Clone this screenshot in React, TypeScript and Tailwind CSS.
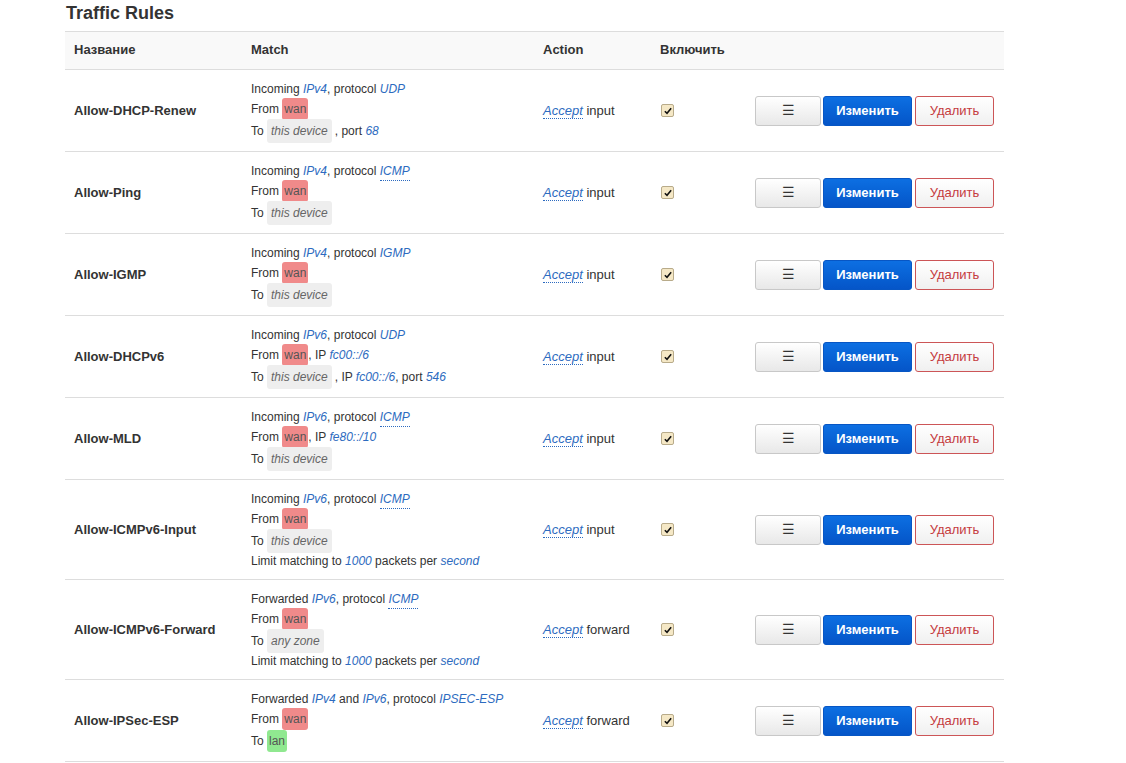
import React from 'react'

type Part = string | { t: string; link?: boolean; dotted?: boolean; badge?: 'red' | 'gray' | 'green' }
type Line = { parts: Part[]; badge?: boolean }

type Rule = {
  name: string
  lines: Line[]
  target: string
}

const L = (t: string, dotted = false): Part => ({ t, link: true, dotted })
const red = (t: string): Part => ({ t, badge: 'red' })
const gray = (t: string): Part => ({ t, badge: 'gray' })
const green = (t: string): Part => ({ t, badge: 'green' })

const limit: Line = {
  parts: ['Limit matching to ', L('1000'), ' packets per ', L('second')],
}

const rules: Rule[] = [
  {
    name: 'Allow-DHCP-Renew',
    lines: [
      { parts: ['Incoming ', L('IPv4'), ', protocol ', L('UDP')] },
      { parts: ['From ', red('wan')], badge: true },
      { parts: ['To ', gray('this device'), ', port ', L('68')], badge: true },
    ],
    target: 'input',
  },
  {
    name: 'Allow-Ping',
    lines: [
      { parts: ['Incoming ', L('IPv4'), ', protocol ', L('ICMP', true)] },
      { parts: ['From ', red('wan')], badge: true },
      { parts: ['To ', gray('this device')], badge: true },
    ],
    target: 'input',
  },
  {
    name: 'Allow-IGMP',
    lines: [
      { parts: ['Incoming ', L('IPv4'), ', protocol ', L('IGMP')] },
      { parts: ['From ', red('wan')], badge: true },
      { parts: ['To ', gray('this device')], badge: true },
    ],
    target: 'input',
  },
  {
    name: 'Allow-DHCPv6',
    lines: [
      { parts: ['Incoming ', L('IPv6'), ', protocol ', L('UDP')] },
      { parts: ['From ', red('wan'), ', IP ', L('fc00::/6')], badge: true },
      { parts: ['To ', gray('this device'), ', IP ', L('fc00::/6'), ', port ', L('546')], badge: true },
    ],
    target: 'input',
  },
  {
    name: 'Allow-MLD',
    lines: [
      { parts: ['Incoming ', L('IPv6'), ', protocol ', L('ICMP', true)] },
      { parts: ['From ', red('wan'), ', IP ', L('fe80::/10')], badge: true },
      { parts: ['To ', gray('this device')], badge: true },
    ],
    target: 'input',
  },
  {
    name: 'Allow-ICMPv6-Input',
    lines: [
      { parts: ['Incoming ', L('IPv6'), ', protocol ', L('ICMP', true)] },
      { parts: ['From ', red('wan')], badge: true },
      { parts: ['To ', gray('this device')], badge: true },
      limit,
    ],
    target: 'input',
  },
  {
    name: 'Allow-ICMPv6-Forward',
    lines: [
      { parts: ['Forwarded ', L('IPv6'), ', protocol ', L('ICMP', true)] },
      { parts: ['From ', red('wan')], badge: true },
      { parts: ['To ', gray('any zone')], badge: true },
      limit,
    ],
    target: 'forward',
  },
  {
    name: 'Allow-IPSec-ESP',
    lines: [
      { parts: ['Forwarded ', L('IPv4'), ' and ', L('IPv6'), ', protocol ', L('IPSEC-ESP')] },
      { parts: ['From ', red('wan')], badge: true },
      { parts: ['To ', green('lan')], badge: true },
    ],
    target: 'forward',
  },
]

function Piece({ p }: { p: Part }) {
  if (typeof p === 'string') return <span className="whitespace-pre">{p}</span>
  if (p.badge === 'red')
    return <span className="rounded-[3px] bg-[#f08a8a] px-[2px] py-[2px] text-[#555]">{p.t}</span>
  if (p.badge === 'green')
    return <span className="rounded-[3px] bg-[#90e890] px-[2px] py-[2px] text-[#555]">{p.t}</span>
  if (p.badge === 'gray')
    return <span className="mr-[3px] rounded-[3px] bg-[#eeeeee] px-[4px] py-[3px] italic text-[#666]">{p.t}</span>
  return (
    <span
      className={
        'italic text-[#2d6bc0]' +
        (p.dotted ? ' border-b border-dotted border-[#2d6bc0]' : '')
      }
    >
      {p.t}
    </span>
  )
}

function Checkbox() {
  return (
    <span className="inline-flex h-[13px] w-[13px] items-center justify-center rounded-[2px] border border-[#b8ab8a] bg-[#f5e8c6]">
      <svg viewBox="0 0 12 12" className="h-[10px] w-[10px]">
        <path d="M2.2 6.3 L4.8 8.8 L9.8 2.8" fill="none" stroke="#111" strokeWidth="1.9" />
      </svg>
    </span>
  )
}

function Row({ r }: { r: Rule }) {
  return (
    <tr className="border-b border-[#dddddd]">
      <td className="px-[9px] align-middle text-[13px] font-bold text-[#333]">{r.name}</td>
      <td className="px-[9px] pt-[10px] pb-[9px] align-middle text-[12px] text-[#333]">
        {r.lines.map((ln, i) => (
          <div key={i} className={ln.badge ? 'flex h-[22px] items-center' : 'flex h-[18px] items-center'}>
            {ln.parts.map((p, j) => (
              <Piece key={j} p={p} />
            ))}
          </div>
        ))}
      </td>
      <td className="px-[9px] align-middle text-[13px] text-[#333]">
        <span className="border-b border-dotted border-[#2d6bc0] italic text-[#2d6bc0]">Accept</span> {r.target}
      </td>
      <td className="px-[10px] align-middle">
        <span className="flex">
          <Checkbox />
        </span>
      </td>
      <td className="pl-[9px] align-middle">
        <div className="flex">
          <button className="h-[30px] w-[66px] rounded-[3px] border border-[#c8c8c8] bg-gradient-to-b from-white to-[#e8e8e8] text-[14px] text-[#333]">
            ☰
          </button>
          <button className="ml-[2px] h-[30px] w-[89px] rounded-[3px] border border-[#0756c4] bg-gradient-to-b from-[#0d6fe2] to-[#0555c8] text-[13px] font-bold text-white">
            Изменить
          </button>
          <button className="ml-[3px] h-[30px] w-[79px] rounded-[3px] border border-[#cc5557] bg-gradient-to-b from-white to-[#f0f0f0] text-[13px] text-[#c53b3e]">
            Удалить
          </button>
        </div>
      </td>
    </tr>
  )
}

export default function App() {
  return (
    <div className="min-h-screen bg-white font-['Liberation_Sans',Arial,sans-serif]">
      <div className="w-[1004px] pl-[65px]">
        <h2 className="h-[31px] pl-[1px] pt-[2px] text-[18px] font-bold leading-[22px] text-[#333]">Traffic Rules</h2>
        <table className="w-[939px] table-fixed border-collapse">
          <colgroup>
            <col className="w-[177px]" />
            <col className="w-[292px]" />
            <col className="w-[117px]" />
            <col className="w-[95px]" />
            <col />
          </colgroup>
          <thead>
            <tr className="h-[38px] border-y border-[#dddddd] bg-[#f9f9f9] text-left text-[13px] font-bold text-[#333]">
              <th className="px-[9px] pb-[2px]">Название</th>
              <th className="px-[9px] pb-[2px]">Match</th>
              <th className="px-[9px] pb-[2px]">Action</th>
              <th className="px-[9px] pb-[2px]">Включить</th>
              <th />
            </tr>
          </thead>
          <tbody>
            {rules.map((r) => (
              <Row key={r.name} r={r} />
            ))}
          </tbody>
        </table>
      </div>
    </div>
  )
}
